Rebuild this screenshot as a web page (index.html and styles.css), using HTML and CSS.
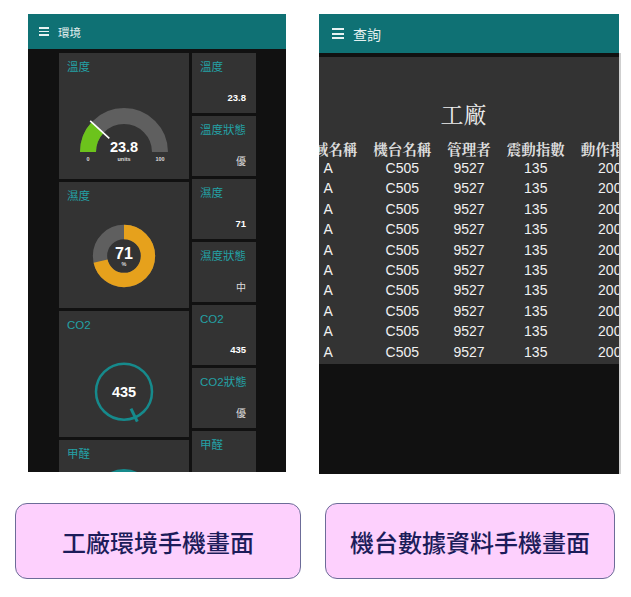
FILE: index.html
```html
<!DOCTYPE html>
<html lang="zh-Hant">
<head>
<meta charset="utf-8">
<title>手機畫面</title>
<link rel="stylesheet" href="styles.css">
</head>
<body>
<div class="page">
  <div class="phones">
    <div class="phone phone-env">
      <div class="appbar">
        <span class="burger"><i></i><i></i><i></i></span>
        <span class="appbar-title">環境</span>
      </div>
      <div class="dash">
        <div class="col-big">
          <div class="big-card">
            <div class="card-title">溫度</div>
            <svg class="widget" viewBox="0 0 130 105" width="130" height="105">
              <path d="M29 78 A36 36 0 0 1 101 78" fill="none" stroke="#5f5f5f" stroke-width="16"/>
              <path d="M29 78 A36 36 0 0 1 38.6 53.5" fill="none" stroke="#6cc31c" stroke-width="16"/>
              <line x1="50.3" y1="64.4" x2="31.2" y2="46.8" stroke="#ffffff" stroke-width="1.6"/>
              <text x="65" y="78" text-anchor="middle" class="w-val">23.8</text>
              <text x="29" y="87" text-anchor="middle" class="w-lbl">0</text>
              <text x="65" y="87" text-anchor="middle" class="w-lbl">units</text>
              <text x="101" y="87" text-anchor="middle" class="w-lbl">100</text>
            </svg>
          </div>
          <div class="big-card">
            <div class="card-title">濕度</div>
            <svg class="widget" viewBox="0 0 130 105" width="130" height="105">
              <circle cx="65" cy="53" r="24" fill="none" stroke="#5f5f5f" stroke-width="14.3"/>
              <circle cx="65" cy="53" r="24" fill="none" stroke="#e6a11c" stroke-width="14.3" stroke-dasharray="107.1 200" transform="rotate(-90 65 53)"/>
              <text x="65" y="56" text-anchor="middle" class="w-big">71</text>
              <text x="65" y="63" text-anchor="middle" class="w-lbl">%</text>
            </svg>
          </div>
          <div class="big-card">
            <div class="card-title">CO2</div>
            <svg class="widget" viewBox="0 0 130 105" width="130" height="105">
              <circle cx="65" cy="59.7" r="28" fill="none" stroke="#168a8c" stroke-width="2.5"/>
              <line x1="72" y1="76.7" x2="78.3" y2="89.7" stroke="#168a8c" stroke-width="3"/>
              <text x="65" y="65" text-anchor="middle" class="w-val">435</text>
            </svg>
          </div>
          <div class="big-card">
            <div class="card-title">甲醛</div>
            <svg class="widget" viewBox="0 0 130 105" width="130" height="105">
              <circle cx="65" cy="37.5" r="28" fill="none" stroke="#168a8c" stroke-width="3"/>
            </svg>
          </div>
        </div>
        <div class="col-small">
          <div class="small-card"><div class="card-title">溫度</div><div class="small-val num">23.8</div></div>
          <div class="small-card"><div class="card-title">溫度狀態</div><div class="small-val">優</div></div>
          <div class="small-card"><div class="card-title">濕度</div><div class="small-val num">71</div></div>
          <div class="small-card"><div class="card-title">濕度狀態</div><div class="small-val">中</div></div>
          <div class="small-card"><div class="card-title">CO2</div><div class="small-val num">435</div></div>
          <div class="small-card"><div class="card-title">CO2狀態</div><div class="small-val">優</div></div>
          <div class="small-card"><div class="card-title">甲醛</div><div class="small-val"></div></div>
        </div>
      </div>
    </div>

    <div class="phone phone-query">
      <div class="appbar appbar-tall">
        <span class="burger burger-lg"><i></i><i></i><i></i></span>
        <span class="appbar-title title-lg">查詢</span>
      </div>
      <div class="query-body">
        <div class="table-card">
          <div class="table-title">工廠</div>
          <div class="table-wrap">
            <table class="data">
              <thead>
                <tr><th>區域名稱</th><th>機台名稱</th><th>管理者</th><th>震動指數</th><th>動作指數</th></tr>
              </thead>
              <tbody>
                <tr><td>A</td><td>C505</td><td>9527</td><td>135</td><td>200</td></tr>
                <tr><td>A</td><td>C505</td><td>9527</td><td>135</td><td>200</td></tr>
                <tr><td>A</td><td>C505</td><td>9527</td><td>135</td><td>200</td></tr>
                <tr><td>A</td><td>C505</td><td>9527</td><td>135</td><td>200</td></tr>
                <tr><td>A</td><td>C505</td><td>9527</td><td>135</td><td>200</td></tr>
                <tr><td>A</td><td>C505</td><td>9527</td><td>135</td><td>200</td></tr>
                <tr><td>A</td><td>C505</td><td>9527</td><td>135</td><td>200</td></tr>
                <tr><td>A</td><td>C505</td><td>9527</td><td>135</td><td>200</td></tr>
                <tr><td>A</td><td>C505</td><td>9527</td><td>135</td><td>200</td></tr>
                <tr><td>A</td><td>C505</td><td>9527</td><td>135</td><td>200</td></tr>
              </tbody>
            </table>
          </div>
        </div>
      </div>
    </div>
  </div>

  <div class="captions">
    <div class="caption">工廠環境手機畫面</div>
    <div class="caption caption-wide">機台數據資料手機畫面</div>
  </div>
</div>
</body>
</html>
```

FILE: styles.css
```css
* { box-sizing: border-box; }

body {
  margin: 0;
  background: #ffffff;
  font-family: "Liberation Sans", "Noto Sans CJK TC", sans-serif;
}

.phones {
  display: flex;
  align-items: flex-start;
  gap: 33px;
  padding: 14px 0 0 28px;
}

.phone {
  background: #111111;
  overflow: hidden;
}

.phone-env {
  width: 258px;
  height: 458px;
}

.phone-query {
  width: 302px;
  height: 460px;
  background: transparent;
}

/* app bar */
.appbar {
  height: 35px;
  background: #0f7174;
  display: flex;
  align-items: center;
  padding-left: 11px;
  color: #e4f0f0;
}

.appbar-tall {
  height: 39px;
  padding-left: 13px;
  margin-right: 2px;
}

.burger {
  display: flex;
  flex-direction: column;
  gap: 2px;
  width: 10px;
  margin-right: 9px;
}

.burger i {
  display: block;
  height: 1.5px;
  background: #e8f2f2;
}

.burger-lg {
  width: 12px;
  gap: 2.3px;
  margin-right: 9px;
}

.burger-lg i {
  height: 2px;
}

.appbar-title {
  font-family: "Noto Sans CJK TC", sans-serif;
  font-size: 11.5px;
  line-height: 14px;
}

.title-lg {
  font-size: 14px;
  line-height: 18px;
}

/* dashboard */
.dash {
  display: flex;
  gap: 3px;
  padding: 4px 0 0 31px;
}

.col-big,
.col-small {
  display: flex;
  flex-direction: column;
  gap: 3px;
  flex-shrink: 0;
}

.col-big { width: 130px; }
.col-small { width: 64px; }

.big-card {
  height: 126px;
  background: #333333;
  overflow: hidden;
}

.small-card {
  height: 60px;
  background: #333333;
  display: flex;
  flex-direction: column;
  justify-content: space-between;
}

.card-title {
  padding: 7px 8px 0;
  font-family: "Liberation Sans", "Noto Sans CJK TC", sans-serif;
  font-size: 11.5px;
  line-height: 14px;
  color: #24a1a5;
  white-space: nowrap;
}

.widget {
  display: block;
  margin-top: 0;
}

.w-val {
  font-family: "Liberation Sans", sans-serif;
  font-weight: bold;
  font-size: 14.5px;
  fill: #ffffff;
}

.w-big {
  font-family: "Liberation Sans", sans-serif;
  font-weight: bold;
  font-size: 16px;
  fill: #ffffff;
}

.w-lbl {
  font-family: "Liberation Sans", sans-serif;
  font-weight: bold;
  font-size: 5.5px;
  fill: #dddddd;
}

.small-val {
  text-align: right;
  padding: 0 10px 9px 0;
  font-family: "Noto Sans CJK TC", sans-serif;
  font-size: 10px;
  line-height: 12px;
  color: #dddddd;
  min-height: 21px;
}

.small-val.num {
  font-family: "Liberation Sans", sans-serif;
  font-weight: bold;
  font-size: 9.5px;
  color: #ffffff;
}

/* query */
.query-body {
  height: 421px;
  background: #111111;
  padding-top: 4px;
  border-right: 2px solid #cfcfcf;
}

.table-card {
  height: 307px;
  background: #333333;
  padding-top: 44px;
  overflow: hidden;
}

.table-title {
  font-family: "Noto Serif CJK TC", "Liberation Serif", serif;
  font-size: 23px;
  line-height: 26px;
  color: #eeeeee;
  text-align: center;
  padding-right: 11px;
}

.table-wrap {
  display: flex;
  justify-content: center;
  margin-top: 12px;
}

.data {
  flex-shrink: 0;
  border-collapse: collapse;
  white-space: nowrap;
}

.data th {
  padding: 0 8px;
  font-family: "Noto Serif CJK TC", "Noto Sans CJK TC", serif;
  font-weight: bold;
  font-size: 14.5px;
  line-height: 19px;
  color: #dddddd;
  text-align: center;
}

.data td {
  padding: 0 8px;
  font-family: "Liberation Sans", sans-serif;
  font-size: 14px;
  line-height: 20.4px;
  color: #f0f0f0;
  text-align: center;
}

/* captions */
.captions {
  display: flex;
  gap: 24px;
  padding: 29px 0 0 15px;
}

.caption {
  width: 286px;
  height: 76px;
  border: 1px solid #6c6c98;
  border-radius: 12px;
  background: #fdd0fd;
  display: flex;
  align-items: center;
  justify-content: center;
  font-family: "Noto Sans CJK TC", sans-serif;
  font-weight: 500;
  font-size: 24px;
  color: #1c1c5a;
}

.caption-wide {
  width: 290px;
}
```
